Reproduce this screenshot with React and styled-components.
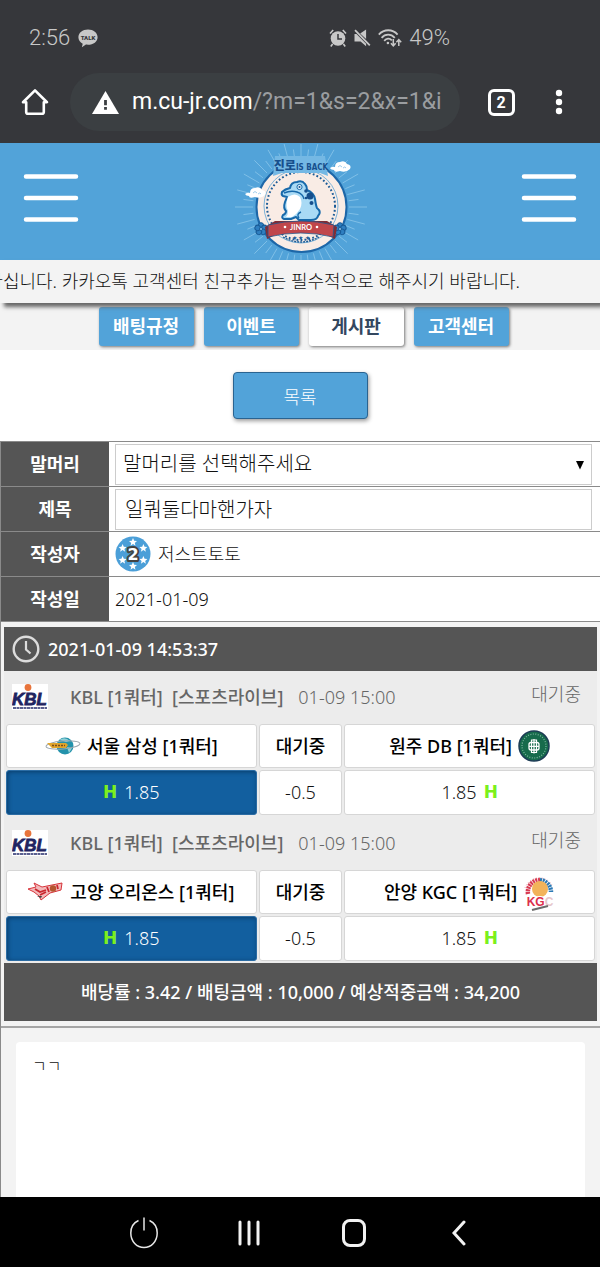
import React from 'react';
import styled, { createGlobalStyle, css } from 'styled-components';

const color = {
   chrome: '#36373b',
   pill: '#3b3f42',
   status: '#c8c8c8',
   blue: '#52a3d9',
   deepBlue: '#125f9f',
   dark: '#555555',
   page: '#f3f3f3',
   row: '#ececec',
   line: '#8a8a8a',
   cell: '#d6d6d6',
   navy: '#33475f',
   green: '#7bf01d',
};

const tabs = [
   { id: 'rule', label: '배팅규정' },
   { id: 'event', label: '이벤트' },
   { id: 'board', label: '게시판', active: true },
   { id: 'center', label: '고객센터' },
];

const games = [
   {
      id: 1,
      home: '서울 삼성 [1쿼터]',
      away: '원주 DB [1쿼터]',
      homeLogo: 'samsung',
      awayLogo: 'db',
   },
   {
      id: 2,
      home: '고양 오리온스 [1쿼터]',
      away: '안양 KGC [1쿼터]',
      homeLogo: 'orions',
      awayLogo: 'kgc',
   },
];

/* ---------- icons ---------- */

const TalkIcon = () => (
   <svg width="20" height="19" viewBox="0 0 20 19" aria-hidden="true">
      <path
         d="M10 0.5C4.6 0.5.4 3.9.4 8.2c0 2.8 1.7 5.2 4.3 6.5L3.9 18.3l4-2.7c6.500.900 11.700-2.600 11.700-7.400C19.600 3.900 15.400.500 10 .500Z"
         fill="#c8c8c8"
      />
      <text
         x="10"
         y="10.500"
         textAnchor="middle"
         fontFamily="Roboto, sans-serif"
         fontWeight="900"
         fontSize="6"
         fill={color.chrome}
      >
         TALK
      </text>
   </svg>
);

const AlarmIcon = () => (
   <svg width="18" height="18" viewBox="0 0 18 18" aria-hidden="true">
      <circle cx="9" cy="9.500" r="7.300" fill="#c8c8c8" />
      <path
         d="M1 4.500 4.200 1M17 4.500 13.800 1M3.600 15 1.800 17.400M14.400 15l1.800 2.400"
         stroke="#c8c8c8"
         strokeWidth="1.600"
         fill="none"
      />
      <path d="M9 5v5h4" stroke={color.chrome} strokeWidth="1.500" fill="none" />
   </svg>
);

const MuteIcon = () => (
   <svg width="17" height="18" viewBox="0 0 17 18" aria-hidden="true">
      <path d="M0.500 5h2l9.600 9.800v2.500L6.600 12.500H0.500ZM12.100 0.500v9.500L6.200 4.500Z" fill="#c8c8c8" />
      <path d="M1 1.200 15.800 16.300" stroke="#c8c8c8" strokeWidth="1.800" />
   </svg>
);

const WifiIcon = () => (
   <svg width="24" height="18" viewBox="0 0 24 18" aria-hidden="true">
      <g fill="none" stroke="#c8c8c8" strokeWidth="1.800">
         <path d="M0.800 5.600C6-.200 14.500-.200 19.600 5.600" />
         <path d="M3.600 8.800C7.200 4.600 13 4.600 16.800 8.800" />
         <path d="M6.200 11.800c2.300-2.600 5.400-2.800 7.600-.400" />
         <path d="M15.300 10v6.500M12.900 14.200l2.400 2.600 2.400-2.600M20.800 17v-6M18.400 13.200l2.400-2.600 2.400 2.600" strokeWidth="1.500" />
      </g>
      <circle cx="9.900" cy="14" r="1.300" fill="#c8c8c8" />
   </svg>
);

const HomeIcon = () => (
   <svg width="28" height="28" viewBox="0 0 28 28" aria-hidden="true">
      <path
         d="M2 14.200 14 2.400l12 11.800h-3.200v9.800q0 1.800-1.800 1.800H7q-1.800 0-1.800-1.800v-9.800Z"
         fill="none"
         stroke="#fff"
         strokeWidth="2.600"
         strokeLinejoin="round"
      />
   </svg>
);

const WarnIcon = () => (
   <svg width="27" height="23" viewBox="0 0 27 23" aria-hidden="true">
      <path d="M13.500 0 27 23H0Z" fill="#fff" />
      <path d="M12.100 9h2.800v5.200h-2.800Zm0 7h2.800v2.800h-2.800Z" fill={color.pill} />
   </svg>
);

const MoreIcon = () => (
   <svg width="8" height="26" viewBox="0 0 8 26" aria-hidden="true">
      <g fill="#fff">
         <circle cx="4" cy="4" r="3.200" />
         <circle cx="4" cy="13" r="3.200" />
         <circle cx="4" cy="22" r="3.200" />
      </g>
   </svg>
);

const BurgerIcon = () => (
   <svg width="56" height="50" viewBox="0 0 56 50" aria-hidden="true">
      <path
         d="M3 3.500h50M3 25h50M3 46.500h50"
         stroke="#fff"
         strokeWidth="4.500"
         strokeLinecap="round"
      />
   </svg>
);

const rays = Array.from({ length: 48 }, (_, i) => (i * Math.PI) / 24);

const Cloud = ({ x, y }) => (
   <g transform={`translate(${x} ${y})`}>
      <path
         d="M0 7q3-2 5-1 0-5 5-5 5-2 7 2 5 1 3 5-4 4-10 2-6 2-6-1-3 0-4-2Z"
         fill="#fff"
      />
      <path d="M8 6q2-3 4 0M13 7q2-2 3 0" stroke="#9fcdeb" fill="none" />
   </g>
);

const Flower = ({ x, y }) => (
   <g transform={`translate(${x} ${y})`} fill="#2f7fc0" stroke="#185a96" strokeWidth="1">
      {[0, 72, 144, 216, 288].map((a) => (
         <circle key={a} cx="0" cy="-3.600" r="2.700" transform={`rotate(${a})`} />
      ))}
      <circle r="1.500" fill="#9ad0f0" />
   </g>
);

const JinroLogo = () => (
   <svg width="140" height="116" viewBox="0 3 140 116" role="img" aria-label="진로 is back">
      <g stroke="#93cbed" strokeWidth="0.700">
         {rays.map((a, i) => (
            <line
               key={a}
               x1={71 + 48 * Math.cos(a)}
               y1={66 + 48 * Math.sin(a)}
               x2={71 + (i % 2 ? 58 : 66) * Math.cos(a)}
               y2={66 + (i % 2 ? 58 : 66) * Math.sin(a)}
            />
         ))}
      </g>
      <circle cx="71.500" cy="66" r="45" fill="#f9ece5" stroke="#1d67a8" strokeWidth="2" />
      <circle
         cx="71"
         cy="65"
         r="34"
         fill="none"
         stroke="#1d5c97"
         strokeWidth="2"
         strokeDasharray="1.800 2.200"
      />
      <circle cx="71" cy="65" r="37" fill="none" stroke="#5da4d6" strokeWidth="0.800" />
      <path d="M45 15h50l3 20-8-3H52l-9 3Z" fill="#74b8e4" />
      <text
         x="71"
         y="29"
         textAnchor="middle"
         fontFamily='"DejaVu Sans Condensed", "Noto Sans CJK KR", sans-serif'
         fontWeight="900"
         fontSize="12"
         fill="#174f8c"
      >
         진로
         <tspan fontSize="8">IS BACK</tspan>
      </text>
      <Cloud x={100} y={20} />
      <Cloud x={15} y={46} />
      <path
         d="M52 51Q55 48 60 47 61 41 67 41 72 39 75 43 77 45 77 49 84 52 85 58 86 65 87 67 92 71 88 75 87 79 81 79H69l-3-3-5 2h-7q-3-1-1-4 3-1 3-4-3-3-1-9l2-5-4-1q-2-1-1-4Z"
         fill="#a9daf5"
         stroke="#1769aa"
         strokeWidth="2"
         strokeLinejoin="round"
      />
      <path d="M58 56q7-5 12 0 3 6 0 12-3 5-8 8h-6q2-2 2-6-3-5 0-14Z" fill="#fff" />
      <path
         d="M54 52q7-3 13-1 6 2 7 7M71 71q-5 2-2 6"
         fill="none"
         stroke="#1769aa"
         strokeWidth="1.400"
      />
      <circle cx="69.500" cy="46" r="2.600" fill="#e6f5fd" stroke="#1769aa" />
      <circle cx="69.500" cy="46" r="1" fill="#174f8c" />
      <g fill="#174f8c">
         <circle cx="80" cy="55" r="3.500" />
         <circle cx="76" cy="50" r="1.800" />
         <circle cx="81.500" cy="62" r="2" />
         <circle cx="76" cy="57" r="1.300" />
      </g>
      <path d="M53 96q18 10 36 0" fill="none" stroke="#1d5c97" strokeWidth="1.400" strokeDasharray="2 1" />
      <text x="71" y="99" textAnchor="middle" fontSize="6" fontFamily="DejaVu Sans" fill="#1d5c97">
         ★ ★ ★
      </text>
      <Flower x={31} y={88} />
      <Flower x={110} y={88} />
      <path
         d="M35 86 45 80l52 0 10 6-2 12-10-5q-24-5-48 0l-10 5Z"
         fill="#7f2d35"
      />
      <path
         d="M38 84q33-8 66 0l-1 12q-32-8-65 0Z"
         fill="#c0464b"
         stroke="#23568a"
         strokeWidth="0.800"
      />
      <text
         x="71"
         y="88.500"
         textAnchor="middle"
         fontFamily="Lato, sans-serif"
         fontWeight="700"
         fontSize="7.500"
         fill="#fff"
      >
         JINRO
      </text>
      <circle cx="55" cy="86" r="1.300" fill="#fff" />
      <circle cx="87" cy="86" r="1.300" fill="#fff" />
   </svg>
);

const star = 'M0-4 1.200-1.200 4-1 1.800.900 2.500 3.700 0 2.100-2.500 3.700-1.800.900-4-1-1.200-1.200Z';

const LevelBadge = () => (
   <svg width="36" height="36" viewBox="0 0 36 36" role="img" aria-label="레벨 2">
      <circle cx="18" cy="18" r="17.500" fill="#4b9fd8" />
      {[0, 60, 120, 180, 240, 300].map((a) => (
         <g key={a} transform={`rotate(${a} 18 18) translate(18 6) rotate(${-a})`}>
            <path d={star} fill="#fff" />
         </g>
      ))}
      <text
         x="18"
         y="24"
         textAnchor="middle"
         fontFamily="DejaVu Sans, sans-serif"
         fontWeight="700"
         fontSize="16"
         fill="#fff"
         stroke="#444"
         strokeWidth="4"
         strokeLinejoin="round"
         paintOrder="stroke"
      >
         2
      </text>
   </svg>
);

const ClockIcon = () => (
   <svg width="28" height="28" viewBox="0 0 28 28" aria-hidden="true">
      <circle cx="14" cy="14" r="12.300" fill="none" stroke="#dcdcdc" strokeWidth="2.400" />
      <path d="M14 6v8.500l4.500 4" fill="none" stroke="#dcdcdc" strokeWidth="2.200" />
   </svg>
);

const KblLogo = () => (
   <svg width="36" height="26" viewBox="0 0 36 26" role="img" aria-label="KBL">
      <path d="M0 0h36v26H0Z" fill="#fff" />
      <text
         x="17.500"
         y="21"
         textAnchor="middle"
         fontFamily="Liberation Sans, sans-serif"
         fontStyle="italic"
         fontWeight="700"
         fontSize="17"
         fill="#1f2461"
         stroke="#1f2461"
         strokeWidth="0.800"
      >
         KBL
      </text>
      <circle cx="16" cy="3.500" r="3.400" fill="#e8743b" />
      <path d="M1 24h34" stroke="#5a5f8f" strokeWidth="2" strokeDasharray="3 0.500" />
   </svg>
);

const TeamLogo = ({ name }) => {
   if (name === 'samsung') {
      return (
         <svg width="36" height="22" viewBox="0 0 36 22" aria-hidden="true">
            <circle cx="20" cy="11" r="8.500" fill="#2392ab" />
            <path d="M14 5q6-4 11 1l-4 1-3-1ZM22 12l5 1-3 5Z" fill="#8fd0d6" />
            <ellipse cx="18" cy="10" rx="17" ry="4" fill="none" stroke="#9aa5ac" transform="rotate(-5 18 10)" />
            <path d="M2 8h19l2 2-2 3H7Z" fill="#e0a52c" />
            <path d="M7 10.500h13" stroke="#7a4d1c" strokeWidth="1.500" strokeDasharray="2 1" />
         </svg>
      );
   }
   if (name === 'db') {
      return (
         <svg width="32" height="32" viewBox="0 0 32 32" aria-hidden="true">
            <circle cx="16" cy="16" r="15" fill="#176b4c" stroke="#1d3c55" strokeWidth="1.500" />
            <circle
               cx="16"
               cy="16"
               r="12"
               fill="none"
               stroke="#7fb5a0"
               strokeWidth="1.200"
               strokeDasharray="1 1.500"
            />
            <rect x="11" y="12.500" width="10" height="7.500" rx="2" fill="none" stroke="#fff" strokeWidth="1.300" />
            <path
               d="M13.500 10h5v12.500h-5ZM11 16.300h10M16 9v14.500"
               fill="none"
               stroke="#fff"
               strokeWidth="1.200"
            />
         </svg>
      );
   }
   if (name === 'orions') {
      return (
         <svg width="36" height="22" viewBox="0 0 36 22" aria-hidden="true">
            <path
               d="M0 8 8 6 6 2l8 4 20-4-1 7-11 3-9 7-2-4-5-4Z"
               fill="#f3b9ba"
               stroke="#d7343b"
               strokeWidth="1"
            />
            <path d="M7 8l5 3 6-2M12 14l6-3M19 6l2 5M29 4l1 4" stroke="#c9262e" strokeWidth="1.800" fill="none" />
            <circle cx="25" cy="7.500" r="3.200" fill="#b3562f" />
            <path d="M13 17 9 15l5 0Z" fill="#444" />
         </svg>
      );
   }
   return (
      <svg width="32" height="38" viewBox="0 0 32 38" aria-hidden="true">
         <path
            d="M5 21A12 12 0 0 1 17 7"
            fill="none"
            stroke="#d83a52"
            strokeWidth="4.500"
            strokeDasharray="2 0.700"
         />
         <path
            d="M17 7A12 12 0 0 1 28 19"
            fill="none"
            stroke="#2b79b5"
            strokeWidth="4.500"
            strokeDasharray="2 0.700"
         />
         <path d="M2 15A15 15 0 0 1 29 12" fill="none" stroke="#e79ba6" strokeDasharray="1 2" />
         <circle cx="17" cy="16" r="8" fill="#f2b35a" />
         <text
            x="17"
            y="33"
            textAnchor="middle"
            fontFamily="Liberation Sans, sans-serif"
            fontWeight="700"
            fontSize="12"
            fill="#dc2f4c"
            stroke="#fff"
            strokeWidth="2"
            paintOrder="stroke"
         >
            KG<tspan fill="#e6c7cc">C</tspan>
         </text>
         <path d="M9 37 25 33" stroke="#6b6b6b" strokeWidth="2" />
      </svg>
   );
};

const PowerIcon = () => (
   <svg width="30" height="34" viewBox="0 0 30 34" aria-hidden="true">
      <path
         d="M9.500 4.500C4.500 6.800 1.800 11.500 1.800 17c0 8.500 6 14.500 13.200 14.500S28.200 25.500 28.200 17c0-5.500-2.700-10.200-7.700-12.500M15 1.500v13"
         fill="none"
         stroke="#e6e6e6"
         strokeWidth="1.500"
      />
   </svg>
);

const RecentIcon = () => (
   <svg width="22" height="26" viewBox="0 0 22 26" aria-hidden="true">
      <path
         d="M2 2v22M11 2v22M20 2v22"
         stroke="#f2f2f2"
         strokeWidth="3"
         strokeLinecap="round"
      />
   </svg>
);

const SquareIcon = () => (
   <svg width="24" height="28" viewBox="0 0 24 28" aria-hidden="true">
      <rect x="1.500" y="1.500" width="21" height="25" rx="6.500" fill="none" stroke="#f2f2f2" strokeWidth="3" />
   </svg>
);

const BackIcon = () => (
   <svg width="14" height="26" viewBox="0 0 14 26" aria-hidden="true">
      <path
         d="M12 2 2 13l10 11"
         fill="none"
         stroke="#f2f2f2"
         strokeWidth="3"
         strokeLinecap="round"
      />
   </svg>
);

/* ---------- sections ---------- */

const PhoneTop = () => (
   <Chrome>
      <StatusBar>
         <StatusGroup>
            <span>2:56</span>
            <TalkIcon />
         </StatusGroup>
         <StatusGroup $tight>
            <AlarmIcon />
            <MuteIcon />
            <WifiIcon />
            <span>49%</span>
         </StatusGroup>
      </StatusBar>
      <AddressBar>
         <IconButton aria-label="홈">
            <HomeIcon />
         </IconButton>
         <AddressPill>
            <WarnIcon />
            <Address>
               m.cu-jr.com<AddressPath>/?m=1&amp;s=2&amp;x=1&amp;i</AddressPath>
            </Address>
         </AddressPill>
         <IconButton aria-label="탭 2개">
            <TabCount>2</TabCount>
         </IconButton>
         <IconButton aria-label="더보기">
            <MoreIcon />
         </IconButton>
      </AddressBar>
   </Chrome>
);

const Game = ({ game }) => (
   <>
      <LeagueRow>
         <KblLogo />
         <League>KBL [1쿼터]&nbsp; [스포츠라이브]</League>
         <GameTime>01-09 15:00</GameTime>
         <GameState>대기중</GameState>
      </LeagueRow>
      <OddsGrid>
         <TeamCell>
            <TeamLogo name={game.homeLogo} />
            {game.home}
         </TeamCell>
         <TeamCell>대기중</TeamCell>
         <TeamCell>
            {game.away}
            <TeamLogo name={game.awayLogo} />
         </TeamCell>
         <OddsButton $picked>
            <Handicap>H</Handicap>
            1.85
         </OddsButton>
         <OddsButton>-0.5</OddsButton>
         <OddsButton>
            1.85
            <Handicap>H</Handicap>
         </OddsButton>
      </OddsGrid>
   </>
);

const App = () => {
   return (
      <Page>
         <GlobalStyle />
         <PhoneTop />
         <SiteHeader>
            <MenuButton aria-label="메뉴">
               <BurgerIcon />
            </MenuButton>
            <JinroLogo />
            <MenuButton aria-label="내 정보">
               <BurgerIcon />
            </MenuButton>
         </SiteHeader>
         <Notice>
            <NoticeText>
               바십니다. 카카오톡 고객센터 친구추가는 필수적으로 해주시기 바랍니다.
            </NoticeText>
         </Notice>
         <TabBar>
            {tabs.map((tab) => (
               <TabLink key={tab.id} href={`#${tab.id}`} $active={tab.active}>
                  {tab.label}
               </TabLink>
            ))}
         </TabBar>
         <ListBar>
            <ListButton>목록</ListButton>
         </ListBar>

         <Post>
            <FormTable>
               <tbody>
                  <tr>
                     <Th scope="row">
                        <label htmlFor="category">말머리</label>
                     </Th>
                     <Td>
                        <SelectWrapper>
                           <Select id="category" defaultValue="">
                              <option value="">말머리를 선택해주세요</option>
                           </Select>
                           <svg width="10" height="10" viewBox="0 0 10 10" aria-hidden="true">
                              <path d="M1 1h8L5 9.500Z" fill="#000" />
                           </svg>
                        </SelectWrapper>
                     </Td>
                  </tr>
                  <tr>
                     <Th scope="row">
                        <label htmlFor="title">제목</label>
                     </Th>
                     <Td>
                        <Input id="title" type="text" defaultValue="일쿼둘다마핸가자" />
                     </Td>
                  </tr>
                  <tr>
                     <Th scope="row">작성자</Th>
                     <Td>
                        <Writer>
                           <LevelBadge />
                           저스트토토
                        </Writer>
                     </Td>
                  </tr>
                  <tr>
                     <Th scope="row">작성일</Th>
                     <Td>2021-01-09</Td>
                  </tr>
               </tbody>
            </FormTable>

            <Slip>
               <SlipHead>
                  <ClockIcon />
                  2021-01-09 14:53:37
               </SlipHead>
               {games.map((game) => (
                  <Game key={game.id} game={game} />
               ))}
               <SlipTotal>배당률 : 3.42 / 배팅금액 : 10,000 / 예상적중금액 : 34,200</SlipTotal>
            </Slip>

            <Body>
               <BodyText>ㄱㄱ</BodyText>
            </Body>
         </Post>

         <NavBar>
            <IconButton aria-label="전원">
               <PowerIcon />
            </IconButton>
            <IconButton aria-label="최근 앱">
               <RecentIcon />
            </IconButton>
            <IconButton aria-label="홈 화면">
               <SquareIcon />
            </IconButton>
            <IconButton aria-label="뒤로">
               <BackIcon />
            </IconButton>
         </NavBar>
      </Page>
   );
};

/* ---------- styles ---------- */

const GlobalStyle = createGlobalStyle`
   * {
      box-sizing: border-box;
   }

   body {
      margin: 0;
      background-color: #fff;
      font-family: 'Noto Sans', 'Noto Sans CJK KR', sans-serif;
   }

   button, input, select {
      font-family: inherit;
      margin: 0;
   }

   svg {
      flex-shrink: 0;
   }
`;

const Page = styled.div`
   display: flex;
   flex-direction: column;
   min-height: 100vh;
   overflow: hidden;
   font-size: 18px;
   line-height: 24px;
   font-weight: 300;
   color: #111;
`;

const Chrome = styled.header`
   background-color: ${color.chrome};
   font-family: Roboto, sans-serif;
   padding-bottom: 12px;
`;

const StatusBar = styled.div`
   display: flex;
   justify-content: space-between;
   align-items: center;
   padding: 26px 150px 23px 29px;
   color: ${color.status};
   font-size: 22px;
   font-weight: 300;
`;

const StatusGroup = styled.div`
   display: flex;
   align-items: center;
   gap: ${(p) => (p.$tight ? '7px' : '8px')};
`;

const AddressBar = styled.div`
   display: grid;
   grid-template-columns: 70px 1fr 82px 34px;
   align-items: center;
   padding-right: 24px;
`;

const IconButton = styled.button`
   display: grid;
   place-items: center;
   padding: 0;
   border: none;
   background: none;
   color: #fff;
   cursor: pointer;
`;

const MenuButton = styled(IconButton)`
   padding-bottom: 7px;
`;

const AddressPill = styled.div`
   display: flex;
   align-items: center;
   gap: 13px;
   height: 58px;
   padding: 0 14px 0 22px;
   border-radius: 29px;
   background-color: ${color.pill};
   overflow: hidden;
`;

const Address = styled.div`
   color: #fff;
   font-size: 23px;
   font-weight: 400;
   white-space: nowrap;
`;

const AddressPath = styled.span`
   color: #9a9da0;
`;

const TabCount = styled.span`
   display: grid;
   place-items: center;
   width: 27px;
   height: 27px;
   border: 3px solid #fff;
   border-radius: 6px;
   font-family: Roboto, sans-serif;
   font-size: 16px;
   font-weight: 700;
`;

const SiteHeader = styled.div`
   display: flex;
   justify-content: space-between;
   align-items: center;
   height: 117px;
   padding: 0 23px;
   background-color: ${color.blue};
`;

const Notice = styled.div`
   position: relative;
   display: flex;
   justify-content: flex-end;
   align-items: center;
   height: 43px;
   padding: 0 80px 2px 0;
   background-color: ${color.page};
   box-shadow: 4px 4px 4px #666;
`;

const NoticeText = styled.p`
   margin: 0;
   white-space: nowrap;
`;

const TabBar = styled.nav`
   display: flex;
   justify-content: center;
   gap: 10px;
   padding: 4px 0 4px 7px;
   background-color: ${color.page};
`;

const TabLink = styled.a`
   display: grid;
   place-items: center;
   width: 95px;
   height: 39px;
   padding-bottom: 2px;
   border-radius: 3px;
   background-color: ${(p) => (p.$active ? '#fff' : color.blue)};
   color: ${(p) => (p.$active ? color.navy : '#fff')};
   box-shadow: 1px 1px 3px #777;
   font-weight: 600;
   text-decoration: none;
`;

const ListBar = styled.div`
   display: flex;
   justify-content: center;
   padding: 22px 0;
   background-color: #fff;
`;

const ListButton = styled.button`
   width: 135px;
   height: 47px;
   border: 1px solid #2a6390;
   border-radius: 4px;
   background-color: ${color.blue};
   box-shadow: 1px 2px 4px #999;
   color: #fff;
   font-size: 18px;
   font-weight: 300;
`;

const Post = styled.main`
   display: flex;
   flex-direction: column;
   flex: 1;
   border-left: 1px solid ${color.line};
`;

const FormTable = styled.table`
   width: 100%;
   border-collapse: collapse;
   background-color: #fff;
`;

const Th = styled.th`
   width: 108px;
   height: 45px;
   padding: 0;
   border-top: 1px solid ${color.line};
   border-bottom: 1px solid ${color.line};
   background-color: ${color.dark};
   color: #fff;
   font-weight: 600;
   text-align: center;
`;

const Td = styled.td`
   padding: 0 8px 0 6px;
   border-top: 1px solid ${color.line};
   border-bottom: 1px solid ${color.line};
`;

const field = css`
   display: block;
   width: 100%;
   height: 41px;
   border: 1px solid #ccc;
   border-radius: 0;
   background-color: #fff;
   color: #111;
   font-size: 20px;
   font-weight: 300;
`;

const SelectWrapper = styled.div`
   position: relative;

   svg {
      position: absolute;
      top: 16px;
      right: 7px;
      pointer-events: none;
   }
`;

const Select = styled.select`
   ${field}
   padding: 0 7px 2px;
   appearance: none;
`;

const Input = styled.input`
   ${field}
   padding: 0 9px 2px;
`;

const Writer = styled.div`
   display: flex;
   align-items: center;
   gap: 7px;
`;

const Slip = styled.section`
   padding: 5px 3px;
   background-color: ${color.page};
   border-bottom: 2px solid #a5a5a5;
`;

const SlipHead = styled.div`
   display: flex;
   align-items: center;
   gap: 8px;
   height: 44px;
   padding: 0 8px;
   background-color: ${color.dark};
   color: #fff;
   font-weight: 500;
`;

const LeagueRow = styled.div`
   display: flex;
   align-items: center;
   height: 53px;
   padding: 0 16px 2px 8px;
   background-color: ${color.row};
   color: #666;
`;

const League = styled.span`
   margin-left: 22px;
   font-weight: 500;
`;

const GameTime = styled.span`
   margin-left: 15px;
`;

const GameState = styled.span`
   margin-left: auto;
   padding-bottom: 6px;
`;

const OddsGrid = styled.div`
   display: grid;
   grid-template-columns: 3fr 1fr 3fr;
   gap: 2px;
   padding: 0 2px 2px;
   background-color: ${color.row};
`;

const TeamCell = styled.div`
   display: flex;
   justify-content: center;
   align-items: center;
   gap: 6px;
   height: 44px;
   border: 1px solid ${color.cell};
   border-radius: 3px;
   background-color: #fff;
   color: #000;
   font-weight: 500;
   white-space: nowrap;
`;

const OddsButton = styled.button`
   display: flex;
   justify-content: center;
   align-items: center;
   gap: 7px;
   height: 45px;
   padding: 0 0 2px;
   border: 1px solid ${(p) => (p.$picked ? '#2b6ca4' : color.cell)};
   border-radius: 3px;
   background-color: ${(p) => (p.$picked ? color.deepBlue : '#fff')};
   box-shadow: ${(p) => (p.$picked ? 'inset 1px 1px 4px #0a3d6b' : 'none')};
   color: ${(p) => (p.$picked ? '#fff' : '#111')};
   font-size: 18px;
   font-weight: 300;
   cursor: pointer;
`;

const Handicap = styled.span`
   color: ${color.green};
   font-family: 'DejaVu Sans', sans-serif;
   font-size: 17px;
   font-weight: 700;
`;

const SlipTotal = styled.div`
   display: grid;
   place-items: center;
   height: 58px;
   background-color: ${color.dark};
   color: #fff;
   font-weight: 500;
`;

const Body = styled.article`
   display: flex;
   flex: 1;
   padding: 14px 15px 0;
   background-color: ${color.page};
`;

const BodyText = styled.p`
   flex: 1;
   margin: 0;
   padding: 12px 16px;
   border-radius: 4px 4px 0 0;
   background-color: #fff;
   font-size: 16px;
`;

const NavBar = styled.footer`
   display: grid;
   grid-template-columns: repeat(4, 105px);
   justify-content: center;
   height: 70px;
   padding: 2px 0 0 2px;
   background-color: #000;
`;

export default App;
